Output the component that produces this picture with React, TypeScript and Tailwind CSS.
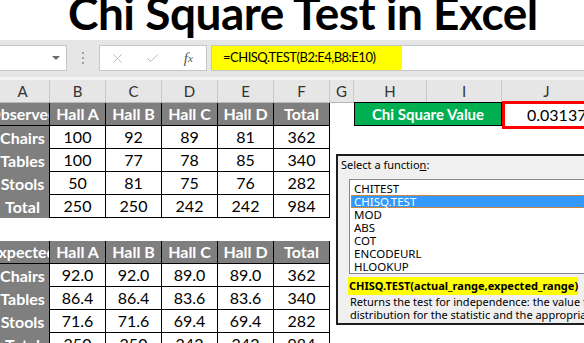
import { X, Check } from "lucide-react";

const observed = [
  ["Observed", "Hall A", "Hall B", "Hall C", "Hall D", "Total"],
  ["Chairs", "100", "92", "89", "81", "362"],
  ["Tables", "100", "77", "78", "85", "340"],
  ["Stools", "50", "81", "75", "76", "282"],
  ["Total", "250", "250", "242", "242", "984"],
];

const expected = [
  ["Expected", "Hall A", "Hall B", "Hall C", "Hall D", "Total"],
  ["Chairs", "92.0", "92.0", "89.0", "89.0", "362"],
  ["Tables", "86.4", "86.4", "83.6", "83.6", "340"],
  ["Stools", "71.6", "71.6", "69.4", "69.4", "282"],
  ["Total", "250", "250", "242", "242", "984"],
];

const functions = ["CHITEST", "CHISQ.TEST", "MOD", "ABS", "COT", "ENCODEURL", "HLOOKUP"];

const headers = [
  { l: "A", w: "w-[54px]" },
  { l: "B", w: "w-[56px]" },
  { l: "C", w: "w-[56px]" },
  { l: "D", w: "w-[56px]" },
  { l: "E", w: "w-[56px]" },
  { l: "F", w: "w-[56px]" },
  { l: "G", w: "w-[24px]" },
  { l: "H", w: "w-[73px]" },
  { l: "I", w: "w-[75px]" },
  { l: "J", w: "w-[90px]" },
];

function TableRow({ cells, head, children }: { cells: string[]; head?: boolean; children?: React.ReactNode }) {
  return (
    <div className="flex h-[23px] shrink-0">
      {cells.map((c, i) => {
        let cls = "bg-white text-black font-normal border-r border-b border-black";
        if (i === 0) {
          cls = head
            ? "bg-[#7f7f7f] text-white font-bold border-r border-b border-black"
            : "bg-[#7f7f7f] text-white font-bold border-r border-black";
        } else if (head) {
          cls = "bg-[#7f7f7f] text-white font-bold border-r border-b border-black";
        }
        return (
          <div
            key={i}
            className={`${i === 0 ? "w-[54px]" : "w-[56px]"} ${cls} flex items-center justify-center overflow-hidden whitespace-nowrap text-[16px] shrink-0`}
          >
            {c}
          </div>
        );
      })}
      {children}
    </div>
  );
}

export default function App() {
  return (
    <div className="relative w-[584px] h-[343px] overflow-hidden bg-white font-['Lato',sans-serif]">
      {/* title */}
      <div className="h-[40px] overflow-hidden">
        <h1 className="pl-[68px] text-[46px] leading-[26px] font-bold text-black whitespace-nowrap tracking-[-0.5px]">
          Chi Square Test in Excel
        </h1>
      </div>

      {/* formula bar */}
      <div className="h-[37px] bg-[#e6e6e6] flex items-start pt-[5px]">
        <div className="-ml-[2px] w-[69px] h-[26px] bg-white border border-[#c6c6c6] flex items-center justify-end pr-[6px]">
          <div className="w-0 h-0 border-l-[4px] border-r-[4px] border-t-[4px] border-l-transparent border-r-transparent border-t-[#6d6d6d]" />
        </div>
        <div className="w-[32px] h-[26px] flex flex-col items-center justify-center gap-[3px]">
          <div className="w-[2px] h-[2px] bg-[#a0a0a0]" />
          <div className="w-[2px] h-[2px] bg-[#a0a0a0]" />
          <div className="w-[2px] h-[2px] bg-[#a0a0a0]" />
        </div>
        <div className="w-[108px] h-[26px] bg-white border border-[#c6c6c6] flex items-center">
          <div className="w-[36px] flex justify-center">
            <X size={15} strokeWidth={1.5} className="text-[#b4b4b4]" />
          </div>
          <div className="w-[36px] flex justify-center">
            <Check size={15} strokeWidth={1.5} className="text-[#b4b4b4]" />
          </div>
          <div className="w-[36px] flex justify-center font-['Liberation_Serif',serif] italic text-[15px] text-[#555]">
            f<span className="text-[11px] mt-[3px]">x</span>
          </div>
        </div>
        <div className="ml-[4px] flex-1 -mr-[10px] h-[26px] bg-white border border-[#c6c6c6] flex">
          <div className="w-[190px] h-full bg-[#ffff00] pl-[11px] flex items-center text-[13px] tracking-[-0.5px] text-black whitespace-nowrap">
            =CHISQ.TEST(B2:E4,B8:E10)
          </div>
        </div>
      </div>
      <div className="h-[3px] bg-[#f3f3f3]" />

      {/* column headers */}
      <div className="flex h-[23px] -ml-[4px] bg-[#e6e6e6] border-b border-[#b8b8b8]">
        {headers.map((h) => (
          <div
            key={h.l}
            className={`${h.w} shrink-0 border-r border-[#c9c9c9] flex items-center justify-center text-[15px] text-[#333]`}
          >
            {h.l}
          </div>
        ))}
      </div>

      {/* sheet */}
      <div className="-ml-[4px] flex flex-col">
        {observed.map((r, i) => (
          <TableRow key={"o" + i} cells={r} head={i === 0}>
            {i === 0 && (
              <>
                <div className="w-[24px] shrink-0" />
                <div className="w-[148px] shrink-0 -mt-[1px] h-[24px] bg-[#00b050] border border-black text-white font-bold text-[15px] flex items-center justify-center whitespace-nowrap">
                  Chi Square Value
                </div>
                <div className="pl-[25px] flex items-center text-[16px] text-black whitespace-nowrap">0.031374</div>
              </>
            )}
          </TableRow>
        ))}
        <div className="h-[23px] shrink-0" />
        {expected.map((r, i) => (
          <TableRow key={"e" + i} cells={r} head={i === 0} />
        ))}
      </div>

      {/* red annotation box */}
      <div className="absolute left-[502px] top-[101px] w-[100px] h-[28px] border-[3px] border-[#ff0000]" />

      {/* insert function dialog */}
      <div className="absolute left-[336px] top-[154px] w-[270px] h-[171px] border-2 border-[#1e1e1e] bg-[#f0f0f0] font-['Noto_Sans',sans-serif] text-black">
        <div className="pl-[3px] pt-[2px] text-[11px] leading-[14px]">
          Select a functio<span className="underline">n</span>:
        </div>
        <div className="ml-[11px] mt-[7px] h-[95px] bg-white border border-[#828790] pt-[2px] pl-[1px]">
          {functions.map((f) => (
            <div
              key={f}
              className={
                f === "CHISQ.TEST"
                  ? "h-[13px] leading-[11px] pl-[2px] text-[11.5px] bg-[#3399ff] text-white border border-dotted border-[#d8914a]"
                  : "h-[13px] leading-[13px] pl-[3px] text-[11.5px]"
              }
            >
              {f}
            </div>
          ))}
        </div>
        <div className="ml-[10px] mt-[3px] w-[230px] h-[18px] bg-[#ffff00] pl-[1px] flex items-center text-[11px] font-bold whitespace-nowrap">
          CHISQ.TEST(actual_range,expected_range)
        </div>
        <div className="ml-[12px] text-[11px] leading-[13px] whitespace-nowrap">
          <div>Returns the test for independence: the value from the chi-squared</div>
          <div>distribution for the statistic and the appropriate degrees of freedom</div>
        </div>
      </div>
    </div>
  );
}
